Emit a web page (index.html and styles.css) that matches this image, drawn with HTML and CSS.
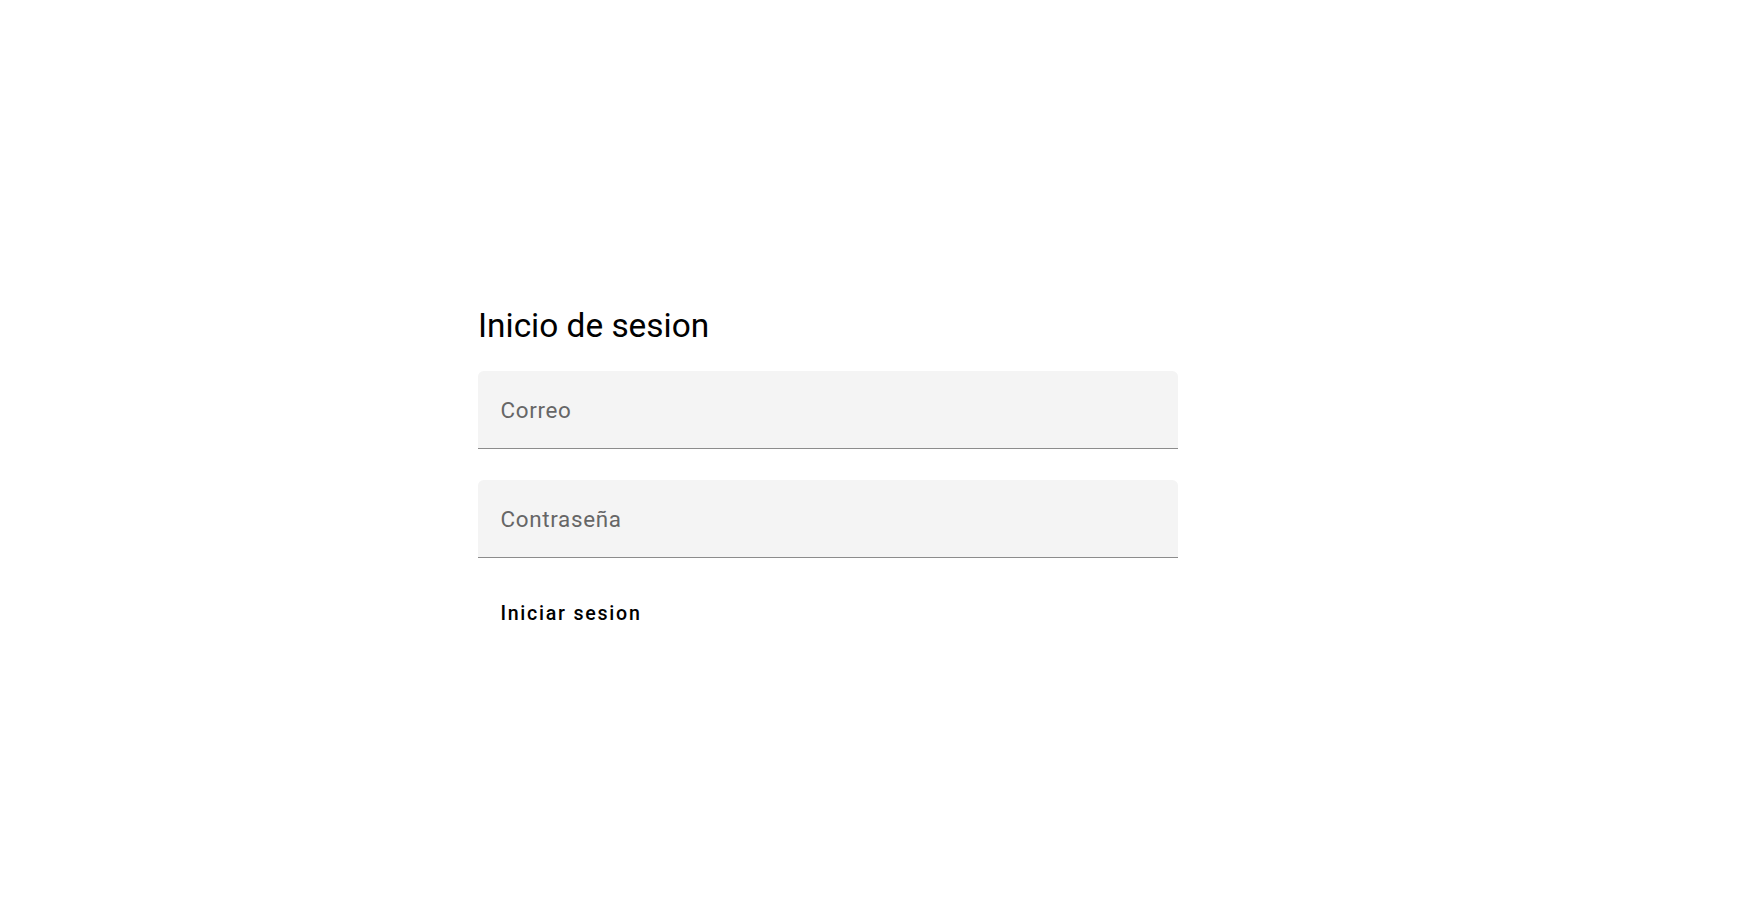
FILE: index.html
```html
<!DOCTYPE html>
<html lang="es">
<head>
<meta charset="utf-8">
<title>Inicio de sesion</title>
<link rel="stylesheet" href="styles.css">
</head>
<body>
<main class="page">
  <form class="login">
    <h1 class="login-title">Inicio de sesion</h1>
    <div class="field">
      <input class="field-input" type="email" placeholder="Correo">
    </div>
    <div class="field">
      <input class="field-input" type="password" placeholder="Contraseña">
    </div>
    <button class="btn" type="button">Iniciar sesion</button>
  </form>
</main>
</body>
</html>
```
FILE: styles.css
```css
* { box-sizing: border-box; }
html, body {
  margin: 0;
  padding: 0;
  background: #ffffff;
  font-family: Roboto, "Liberation Sans", sans-serif;
}
.page {
  min-height: 913px;
  padding: 301px 0 0 478px;
}
.login {
  width: 700px;
  display: flex;
  flex-direction: column;
}
.login-title {
  margin: 0 0 20px 0;
  font-size: 33.4px;
  font-weight: 400;
  line-height: 50px;
  color: #000;
}
.field {
  height: 78px;
  background: #f4f4f4;
  border-radius: 5.6px 5.6px 0 0;
  border-bottom: 1.4px solid #8c8c8c;
  margin-bottom: 31px;
  display: flex;
  align-items: center;
}
.field + .field { margin-bottom: 30px; }
.field-input {
  width: 100%;
  border: none;
  outline: none;
  background: transparent;
  padding: 0 22.4px;
  font-family: Roboto, "Liberation Sans", sans-serif;
  font-size: 22.4px;
  color: #000;
  letter-spacing: 0.7px;
}
.field-input::placeholder { color: #666666; opacity: 1; }
.btn {
  align-self: flex-start;
  height: 50px;
  padding: 0 22.4px;
  border: none;
  background: transparent;
  font-family: Roboto, "Liberation Sans", sans-serif;
  font-size: 19.6px;
  font-weight: 500;
  letter-spacing: 1.75px;
  color: #000;
  cursor: pointer;
}
```
